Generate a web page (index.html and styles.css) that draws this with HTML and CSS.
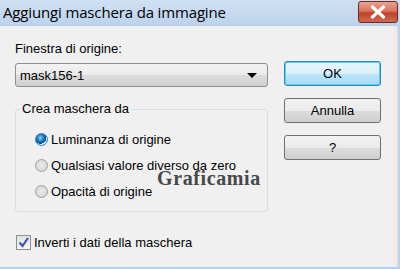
FILE: index.html
```html
<!DOCTYPE html>
<html>
<head>
<meta charset="utf-8">
<link rel="stylesheet" href="styles.css">
</head>
<body>
<div class="window">
  <div class="titlebar">
    <span class="title">Aggiungi maschera da immagine</span>
    <span class="close"><svg width="18" height="14" viewBox="0 0 18 14"><path d="M3.5 2 L14.5 12 M14.5 2 L3.5 12" stroke="#fff" stroke-width="3.2" stroke-linecap="round"/></svg></span>
  </div>
  <div class="body">
    <div class="client">
      <div class="left">
        <div class="label">Finestra di origine:</div>
        <div class="select"><span>mask156-1</span><span class="arrow"></span></div>
        <fieldset class="group">
          <legend>Crea maschera da</legend>
          <div class="radio"><span class="dot on"></span>Luminanza di origine</div>
          <div class="radio"><span class="dot"></span>Qualsiasi valore diverso da zero</div>
          <div class="radio"><span class="dot"></span>Opacità di origine</div>
          <span class="mark">Graficamia</span>
        </fieldset>
        <div class="check"><span class="box"><svg width="13" height="13" viewBox="0 0 13 13"><path d="M2.5 6.5 L5.5 10 L11 2" fill="none" stroke="#3b56b8" stroke-width="2.2"/></svg></span>Inverti i dati della maschera</div>
      </div>
      <div class="buttons">
        <div class="btn ok">OK</div>
        <div class="btn">Annulla</div>
        <div class="btn">?</div>
      </div>
    </div>
    <div class="rframe"></div>
  </div>
</div>
</body>
</html>
```
FILE: styles.css
```css
html, body { margin: 0; padding: 0; }
body { width: 400px; height: 269px; overflow: hidden; font-family: "Liberation Sans", Arial, sans-serif; }
.window { width: 400px; height: 269px; background: linear-gradient(#c9dcf0, #b9d1ea); display: flex; flex-direction: column; box-sizing: border-box; }
.titlebar { height: 26px; display: flex; align-items: flex-start; justify-content: space-between; background: linear-gradient(#cfe0f2, #bcd3ec); }
.title { font-family: "Open Sans", sans-serif; font-size: 15px; color: #000; padding: 2px 0 0 3px; line-height: 20px; letter-spacing: -0.15px; }
.close { margin: 1px 2px 0 0; width: 40px; height: 22px; box-sizing: border-box; border: 1px solid #6b2a22; border-radius: 3px; background: linear-gradient(#e8a493 0%, #d9745e 45%, #c0422c 55%, #cd6a4f 100%); display: flex; align-items: center; justify-content: center; }
.body { flex: 1; display: flex; border-bottom: 2px solid #b7cfe8; }
.client { flex: 1; background: #f0f0f0; display: flex; padding: 0 0 0 15px; font-size: 13px; color: #000; }
.rframe { width: 7px; background: linear-gradient(90deg, #f3ece8, #f5e8e4 60%, #bcd3ec 70%, #bcd3ec); }
.left { width: 253px; display: flex; flex-direction: column; }
.label { margin-top: 15px; line-height: 16px; }
.select { margin-top: 6px; height: 24px; box-sizing: border-box; border: 1px solid #8e8f8f; border-radius: 3px; background: linear-gradient(#f2f2f2, #ebebeb 50%, #dddddd 51%, #cfcfcf); display: flex; align-items: center; justify-content: space-between; padding: 0 10px 0 4px; }
.arrow { width: 0; height: 0; border-left: 5px solid transparent; border-right: 5px solid transparent; border-top: 5px solid #000; }
.group { position: relative; margin: 15px 0 0; padding: 10px 0 0 0; height: 110px; box-sizing: border-box; border: 1px solid #d5dfe5; border-radius: 3px; }
.group legend { padding: 0 2px; margin-left: 4px; line-height: 14px; }
.radio { display: flex; align-items: center; height: 26px; margin-left: 19px; }
.dot { width: 13px; height: 13px; border-radius: 50%; box-sizing: border-box; border: 1px solid #a0a0a0; background: radial-gradient(circle at 50% 50%, #ececec, #cfcfcf); margin-right: 3px; }
.dot.on { border-color: #3c7fb1; background: radial-gradient(circle at 40% 35%, #8fd3ff 0, #1a7bc9 35%, #0b4e8c 60%, #dbe9f5 62%, #dbe9f5); }
.mark { position: absolute; left: 141px; top: 51px; font-family: "Liberation Serif", serif; font-weight: bold; font-size: 20px; line-height: 23px; color: #484848; letter-spacing: 0.6px; }
.check { display: flex; align-items: center; margin-top: 23px; }
.box { width: 15px; height: 15px; box-sizing: border-box; border: 1px solid #8e8f8f; background: linear-gradient(#e0e0e0, #f8f8f8); margin-right: 3px; margin-left: 1px; display: flex; align-items: center; justify-content: center; }
.buttons { margin-left: 16px; margin-top: 35px; display: flex; flex-direction: column; gap: 12px; }
.btn { width: 97px; height: 25px; box-sizing: border-box; border: 1px solid #707070; border-radius: 3px; background: linear-gradient(#f2f2f2, #ebebeb 50%, #dddddd 51%, #cfcfcf); display: flex; align-items: center; justify-content: center; }
.btn.ok { border-color: #3c7fb1; box-shadow: inset 0 0 0 1px #48d7fb; background: linear-gradient(#eaf6fd, #d9f0fc 50%, #bee6fd 51%, #a7d9f5); }
```
